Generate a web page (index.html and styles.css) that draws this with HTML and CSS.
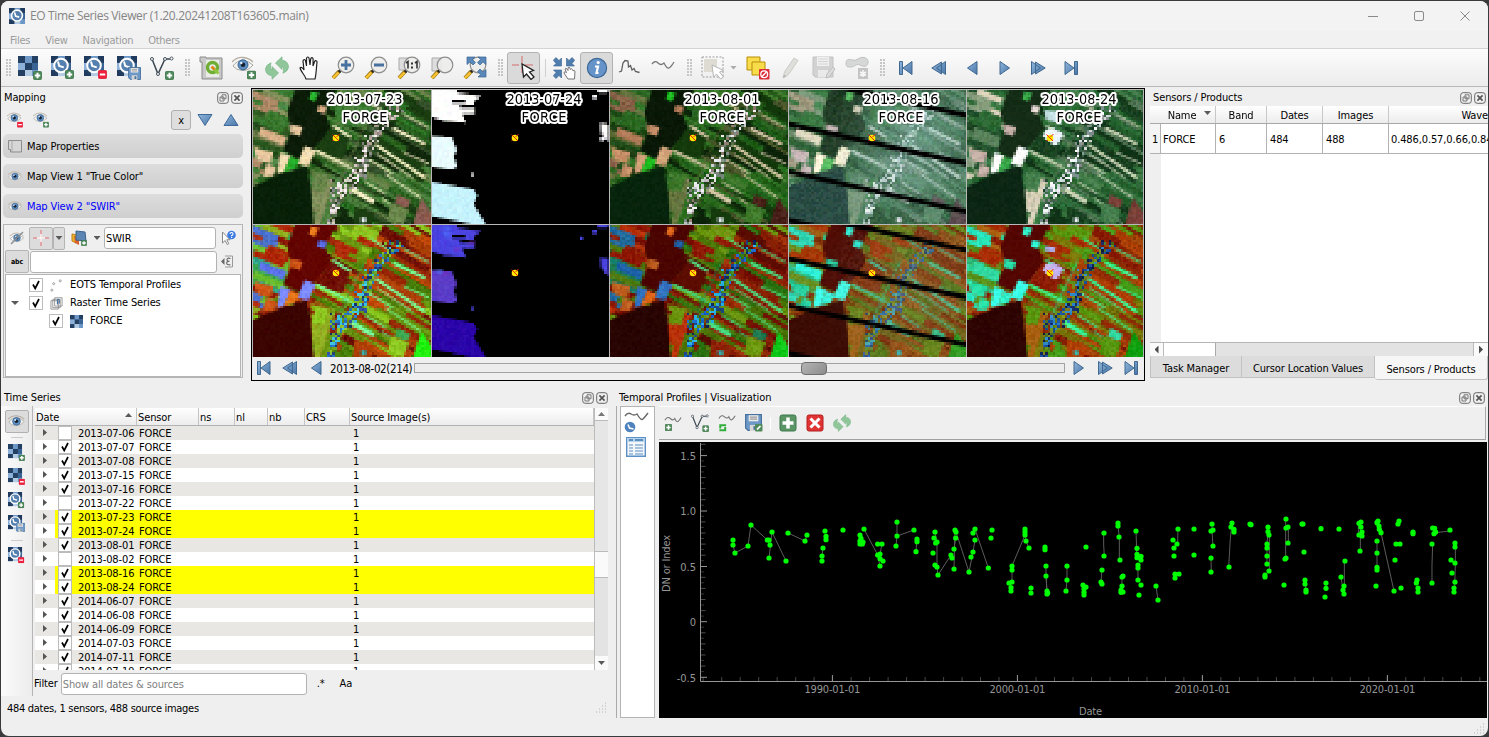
FILE: index.html
```html
<!DOCTYPE html>
<html lang="en">
<head>
<meta charset="utf-8">
<title>EO Time Series Viewer</title>
<link rel="stylesheet" href="styles.css">
</head>
<body>
<svg class="sprite" width="0" height="0" aria-hidden="true">
  <defs>
    <linearGradient id="gBlue" x1="0" y1="0" x2="1" y2="1"><stop offset="0" stop-color="#8fb6dc"/><stop offset="1" stop-color="#4a76a8"/></linearGradient>
  </defs>
  <symbol id="badge-plus" viewBox="0 0 10 10"><rect x=".5" y=".5" width="9" height="9" rx="1.2" fill="#4f8a5b" stroke="#3d7549"/><path d="M5 2v6M2 5h6" stroke="#fff" stroke-width="2.2"/></symbol>
  <symbol id="badge-minus" viewBox="0 0 10 10"><rect x=".5" y=".5" width="9" height="9" rx="1.2" fill="#f0203c" stroke="#e02040"/><path d="M2 5h6" stroke="#fff" stroke-width="2.2"/></symbol>
  <symbol id="checker" viewBox="0 0 20 20"><path fill="#6d97c6" d="M0 0h20v20H0z"/><path fill="#233f62" d="M0 0h7v7H0zM14 0h6v7h-6zM0 14h7v6H0zM7 7h7v7H7z"/><path fill="#8db1d8" d="M0 7h7v7H0z"/><path fill="#3a6494" d="M14 7h6v7h-6z"/><path fill="#b4cbe4" d="M7 14h7v6H7z"/></symbol>
  <symbol id="clock" viewBox="0 0 20 20"><use href="#checker" width="20" height="20"/><path fill="#1f3a5c" d="M0 0h6L0 6zM14 0h6v6zM0 14v6h6z"/><circle cx="10" cy="9.5" r="6.8" fill="#547fae" stroke="#fff" stroke-width="2"/><path d="M7 5.5l1.2 4.5 4.6 1.4" fill="none" stroke="#fff" stroke-width="2"/></symbol>
  <symbol id="disk" viewBox="0 0 14 14"><path d="M.5.5h13v13h-11l-2-2z" fill="#6d97c6" stroke="#48729d"/><path d="M3 1h8v5H3z" fill="#ececec"/><path d="M4 2.5h6M4 4.3h6" stroke="#999"/><path d="M4 9h6v5H4z" fill="#d6d6d6"/><path d="M7 10h2v3H7z" fill="#4b6f98"/></symbol>
  <symbol id="i-raster-add" viewBox="0 0 24 24"><use href="#checker" width="20" height="20"/><use href="#badge-plus" x="15" y="15" width="9" height="9"/></symbol>
  <symbol id="i-raster-del" viewBox="0 0 24 24"><use href="#checker" width="20" height="20"/><use href="#badge-minus" x="15" y="15" width="9" height="9"/></symbol>
  <symbol id="i-ts-add" viewBox="0 0 24 24"><use href="#clock" width="20" height="20"/><use href="#badge-plus" x="14" y="14" width="9" height="9"/></symbol>
  <symbol id="i-ts-del" viewBox="0 0 24 24"><use href="#clock" width="20" height="20"/><use href="#badge-minus" x="14" y="14" width="9" height="9"/></symbol>
  <symbol id="i-ts-save" viewBox="0 0 24 24"><use href="#clock" width="20" height="20"/><use href="#disk" x="11" y="11" width="13" height="13"/></symbol>
  <symbol id="i-vector-add" viewBox="0 0 24 24"><path d="M2 3l6 15 7-15h5" fill="none" stroke="#3a4652" stroke-width="1.5"/><g fill="#fff" stroke="#47525e"><circle cx="2" cy="3" r="1.5"/><circle cx="8" cy="18" r="1.5"/><circle cx="15" cy="3" r="1.5"/><circle cx="21.500" cy="2.500" r="1.500"/></g><use href="#badge-plus" x="15" y="15" width="9" height="9"/></symbol>
  <symbol id="i-qgis" viewBox="0 0 24 24"><path d="M1 1h6v1h16v21H3V6H1z" fill="#c9c9c9" stroke="#8b8b8b"/><path d="M7 4h13v17H7z" fill="#e9ece4"/><circle cx="13.500" cy="11.500" r="5" fill="none" stroke="#6fae34" stroke-width="3.400"/><path d="M13 11l6.500 6.500" stroke="#8ec63f" stroke-width="3"/><path d="M12.500 10.500l3 3" stroke="#ee7913" stroke-width="2.400"/></symbol>
  <symbol id="eye" viewBox="0 0 22 18"><path d="M1 10Q5 4 11 4.500T21 9Q16 15 10 14.500T1 10z" fill="#f4f4f2" stroke="#a6a6a0"/><path d="M0 6Q5 1 11 1.500T21 6" fill="none" stroke="#b5ada0" stroke-width="1.300"/><circle cx="11" cy="8.800" r="5" fill="#5f8fc2" stroke="#39618e"/><circle cx="11" cy="8.800" r="2.300" fill="#14202e"/><circle cx="9.300" cy="7" r="1.200" fill="#e0ecf8"/></symbol>
  <symbol id="i-eye-add" viewBox="0 0 24 24"><use href="#eye" width="22" height="18"/><use href="#badge-plus" x="15" y="14.500" width="9" height="9"/></symbol>
  <symbol id="i-eye-del" viewBox="0 0 24 24"><use href="#eye" width="22" height="18"/><use href="#badge-minus" x="15" y="14.500" width="9" height="9"/></symbol>
  <symbol id="i-refresh" viewBox="0 0 24 24"><g fill="#8fc79a" stroke="#78b486" stroke-width=".7"><path d="M10.500 7L17 .8v3.400q6.500.8 6.500 7-.5 4-5.500 6 1.500-6.500-1-7v3.300z"/><path d="M13.500 17L7 23.200v-3.400q-6.500-.8-6.500-7 .5-4 5.500-6-1.500 6.500 1 7v-3.300z"/></g></symbol>
  <symbol id="i-hand" viewBox="0 0 24 24"><path d="M8 23c-1-4-5-7-6-11 1-1.500 3 0 4 2L5 5c.5-2 2-2 2.500 0l1 5V2.500c.3-2 2.300-2 2.600 0L12 9l.7-6c.5-2 2.300-1.600 2.400.2L15 10l1.600-4.500c.8-1.500 2.600-.8 2.400.8-.7 6-.8 12-2 16.700z" fill="#fff" stroke="#222" stroke-width="1.200"/></symbol>
  <symbol id="lens" viewBox="0 0 24 24"><path d="M8.500 15L2 22" stroke="#8a6a16" stroke-width="4"/><path d="M7.500 16.500L2 22" stroke="#f6c02e" stroke-width="2.600"/><path d="M10.500 13.500L8 16" stroke="#222" stroke-width="3"/><circle cx="15" cy="9" r="7.800" fill="#ececea" fill-opacity=".9" stroke="#8d8d8d" stroke-width="1.200"/></symbol>
  <symbol id="i-zoom-in" viewBox="0 0 24 24"><use href="#lens" width="24" height="24"/><path d="M15 4v10M10 9h10" stroke="#47719f" stroke-width="2.800"/></symbol>
  <symbol id="i-zoom-out" viewBox="0 0 24 24"><use href="#lens" width="24" height="24"/><path d="M10 9h10" stroke="#47719f" stroke-width="2.800"/></symbol>
  <symbol id="i-zoom-native" viewBox="0 0 24 24"><path d="M2 2h9v12H2z" fill="#ddd" stroke="#aaa"/><use href="#lens" width="24" height="24"/><path d="M9 7l2-1.500V12.500M18 7l2-1.500v7" fill="none" stroke="#333" stroke-width="1.600"/><path d="M14 6.500h2v2h-2zM14 10.500h2v2h-2z" fill="#333"/></symbol>
  <symbol id="i-zoom-layer" viewBox="0 0 24 24"><path d="M2 2h9v13H2z" fill="#ddd" stroke="#aaa"/><use href="#lens" width="24" height="24"/></symbol>
  <symbol id="i-zoom-full" viewBox="0 0 24 24"><use href="#lens" width="24" height="24"/><g fill="#5a88b8" stroke="#3a6593" stroke-width=".7"><path d="M4 1h8L9.500 3.500l3 3-2.500 2.500-3-3L4 8.500z"/><path d="M23 1h-8l2.500 2.500-3 3L17 9l3-3 3 2.500zM23 21h-8l2.500-2.500-3-3 2.500-2.500 3 3 3-2.500z"/></g></symbol>
  <symbol id="i-cross" viewBox="0 0 24 24"><path d="M10 0v7M10 11v6M0 9h7M13 9h8" stroke="#d86a6a" stroke-width="1"/><path d="M10 8l1.500 13 3-3 4.500 5.500 3-2.500-4.500-5 4-1.500z" fill="#fff" stroke="#222" stroke-width="1.300"/></symbol>
  <symbol id="i-center" viewBox="0 0 24 24"><g fill="#4f7eae" stroke="#386390" stroke-width=".6"><path d="M2 3.500L4 1.500l3 3 2.500-2.500v8H1.500L4 7.500l-2.500-3z"/><path d="M22 3.500l-2-2-3 3L14.500 2v8h8L20 7.500l2.500-3zM2 20.500l2 2 3-3 2.500 2.500v-8H1.500L4 16.500l-2.500 3z"/></g><path d="M16 23l-4-6c0-1.500 1.500-1.300 2.500-.3L13 13q.5-1.500 2 0l1 1.500V12q1-1.500 2 0l.4 1.500q1-1.500 2 0l.6 1.300q1.400-1 2 .3L22.500 23z" fill="#fff" stroke="#666" stroke-width=".9"/></symbol>
  <symbol id="i-info" viewBox="0 0 24 24"><circle cx="12" cy="12" r="9.600" fill="#6694c8" stroke="#3d6797" stroke-width="1.200"/><path d="M10 10.500h3l-1.500 6.500h2" fill="none" stroke="#fff" stroke-width="2.200"/><circle cx="13.200" cy="6.500" r="1.600" fill="#fff"/></symbol>
  <symbol id="i-spectral" viewBox="0 0 24 24"><path d="M1 16l2.500-1L5 7l2-2.500 3 .5.500 6L12.500 9.500l1.500 4.500 2-1.500 1.500 3 4 1" fill="none" stroke="#606060" stroke-width="1.300"/></symbol>
  <symbol id="i-wave" viewBox="0 0 24 24"><path d="M1 8Q4 4 7 7t6 0q3 6 5 5t5-6" fill="none" stroke="#777" stroke-width="1.300"/></symbol>
  <symbol id="i-select" viewBox="0 0 24 24"><path d="M3 3h13v13H3z" fill="#dedcd2"/><path d="M1 1h21v20H1z" fill="none" stroke="#9a9a9a" stroke-dasharray="2 1.500"/><path d="M11 9l1.500 12 3-3 4 5 3-2-4-5 4-1.500z" fill="#fff" stroke="#b5b5b5"/></symbol>
  <symbol id="i-deselect" viewBox="0 0 24 24"><g fill="#f8dc4a" stroke="#b98d08"><path d="M1 1h13v13H1z"/><path d="M6 6h13v13H6z"/></g><rect x="13" y="13" width="10.500" height="10.500" rx="1" fill="#dd2c3a"/><circle cx="18.200" cy="18.200" r="3.400" fill="none" stroke="#fff" stroke-width="1.300"/><path d="M16 20.500l4.500-4.500" stroke="#fff" stroke-width="1.300"/></symbol>
  <symbol id="i-pencil" viewBox="0 0 24 24"><path d="M4 22l1.500-6L15 2l4 2.500-9.500 14z" fill="#dededa" stroke="#cbcbc7"/><path d="M4 22l1-3.500 2.500 1.700z" fill="#b5b5b5"/></symbol>
  <symbol id="i-disk-edit" viewBox="0 0 24 24"><path d="M1 1h20v20H3l-2-2z" fill="#d2d2d2" stroke="#c2c2c2"/><path d="M5 1h12v9H5z" fill="#f1f1f1"/><path d="M6 3h10M6 5.500h10M6 8h10" stroke="#d2d2d2"/><path d="M6 14h10v7H6z" fill="#e9e9e9"/><path d="M14 22l1-4 6-7 2 2-6 8z" fill="#ddd" stroke="#bdbdbd"/></symbol>
  <symbol id="i-blob" viewBox="0 0 24 24"><path d="M1 7q0-5 6-3 3 1 6-1c6-4 11 0 10 4s-4 4-8 2-5 2-9 2S1 11 1 7z" fill="#d6d8d8" stroke="#c0c0c0"/><path d="M13 12h10v11H13z" fill="#c4c4c4"/><path d="M18 14v7M15 16l6 3.500M21 16l-6 3.500" stroke="#f5f5f5" stroke-width="1.500"/></symbol>
  <symbol id="i-first" viewBox="0 0 16 16"><path d="M1.500 1.500h3v13h-3zM14 1.500v13L5 8z" fill="url(#gBlue)" stroke="#41688f"/></symbol>
  <symbol id="i-last" viewBox="0 0 16 16"><path d="M11.500 1.500h3v13h-3zM2 1.500v13L11 8z" fill="url(#gBlue)" stroke="#41688f"/></symbol>
  <symbol id="i-back2" viewBox="0 0 16 16"><path d="M14.500 1.500v13L5.500 8zM10.500 2v12L.8 8z" fill="url(#gBlue)" stroke="#41688f"/></symbol>
  <symbol id="i-fwd2" viewBox="0 0 16 16"><path d="M1.500 1.500v13L10.500 8zM5.500 2v12L15.200 8z" fill="url(#gBlue)" stroke="#41688f"/></symbol>
  <symbol id="i-back" viewBox="0 0 16 16"><path d="M13 1.500v13L3.500 8z" fill="url(#gBlue)" stroke="#41688f"/></symbol>
  <symbol id="i-fwd" viewBox="0 0 16 16"><path d="M3 1.500v13L12.500 8z" fill="url(#gBlue)" stroke="#41688f"/></symbol>
  <symbol id="i-up" viewBox="0 0 16 14"><path d="M8 1.500L15 12.500H1z" fill="url(#gBlue)" stroke="#3e6998"/></symbol>
  <symbol id="i-down" viewBox="0 0 16 14"><path d="M8 12.500L15 1.500H1z" fill="url(#gBlue)" stroke="#3e6998"/></symbol>
  <symbol id="i-float" viewBox="0 0 12 12"><rect x=".7" y=".7" width="10.600" height="10.600" rx="2.500" fill="#f2f2f2" stroke="#6a6a6a"/><path d="M5 2.800h4v4H5zM3 5h4v4H3z" fill="#f2f2f2" stroke="#777"/></symbol>
  <symbol id="i-close" viewBox="0 0 12 12"><rect x=".7" y=".7" width="10.600" height="10.600" rx="2.500" fill="#f0f0f0" stroke="#666"/><path d="M3.400 3.400l5.200 5.200M8.600 3.400L3.400 8.600" stroke="#555" stroke-width="1.700"/></symbol>
  <symbol id="i-scroll" viewBox="0 0 14 13"><path d="M.5.500H13.500v11.500h-11V9.500h-2z" fill="#d6d6d6" stroke="#8d8d8d"/><path d="M4 1v11" stroke="#aaa"/></symbol>
  <symbol id="i-eye-off" viewBox="0 0 16 14"><use href="#eye" y="1" width="16" height="12"/><path d="M2 13L14 1" stroke="#8a9096" stroke-width="1.500"/></symbol>
  <symbol id="i-crosshair" viewBox="0 0 16 16"><path d="M8 0v16M0 8h16" stroke="#e86a72" stroke-width="1"/><path d="M8 4v8M4 8h8" stroke="#fff" stroke-width="1.400"/></symbol>
  <symbol id="i-layers" viewBox="0 0 16 16"><path d="M1 4l5 1-1 8-4-2z" fill="#f0b429" stroke="#b9821a"/><path d="M3 6l5 1v8l-4-2z" fill="#d8622e"/><path d="M5 1l9 1 1 9-10-1z" fill="#5d86b4" stroke="#3d638e"/><use href="#badge-plus" x="10" y="10" width="6" height="6"/></symbol>
  <symbol id="i-help" viewBox="0 0 15 16"><path d="M1.500 2v11l2.700-2.500 2 4 1.600-.8-2-4H9z" fill="#fff" stroke="#888"/><circle cx="10.500" cy="5" r="4.300" fill="#3c7be0"/><path d="M9 4q0-1.500 1.500-1.500T12 4t-1.400 1.500v.8" fill="none" stroke="#fff" stroke-width="1.100"/><path d="M10 7h1.200v1.100H10z" fill="#fff"/></symbol>
  <symbol id="i-expr" viewBox="0 0 12 13"><path d="M0 6.500L3.500 3v7z" fill="#666"/><path d="M4 1h7.500v11H4" fill="none" stroke="#999"/><path d="M9.500 3.500q-3.500-1-3.500 1t2.500 1.700q-3 0-2.800 2T9.500 9.800" fill="none" stroke="#666" stroke-width="1.100"/></symbol>
  <symbol id="i-points" viewBox="0 0 14 14"><g fill="#fff" stroke="#999"><circle cx="11" cy="2" r="1.100"/><circle cx="4" cy="5" r="1.100"/><circle cx="2" cy="12" r="1.100"/></g></symbol>
  <symbol id="i-stack" viewBox="0 0 14 14"><path d="M1 4h8v9H1zM3 2.500h8v9H3zM5 .8h8v9H5z" fill="#fff" stroke="#888" stroke-width=".9"/><path d="M8 8V3.500q1-2 2 0V7" fill="none" stroke="#456f9c" stroke-width="1.200"/></symbol>
  <symbol id="i-table" viewBox="0 0 20 20"><path d="M.7.700h18.600v18.600H.7z" fill="#f4f7fa" stroke="#5d90c6" stroke-width="1.400"/><path d="M1 1h18v4H1z" fill="#b7d3ea"/><path d="M3 3h4M9 3h8" stroke="#3f79b4" stroke-width="1.400"/><path d="M3 8h4M9 8h8M3 11h4M9 11h8M3 14h4M9 14h8M3 17h4M9 17h8" stroke="#5b8fc4"/></symbol>
  <symbol id="i-wave-clock" viewBox="0 0 26 24"><path d="M1 6Q4 2 7 4t6 0q4 7 6 5t5-6" fill="none" stroke="#666" stroke-width="1.400"/><circle cx="6" cy="17" r="5.300" fill="#4e83bd"/><path d="M4 14.500l1.500 3.500 4 1" fill="none" stroke="#fff" stroke-width="1.500"/></symbol>
  <symbol id="i-prof-add" viewBox="0 0 20 20"><path d="M1 7Q4 2 7 5t5 0q2 5 4 3t3-4" fill="none" stroke="#777" stroke-width="1.200"/><use href="#badge-plus" x="1" y="11" width="8" height="8"/></symbol>
  <symbol id="i-prof-sync" viewBox="0 0 20 20"><path d="M1 5Q4 0 7 3t5 0q2 5 4 3t3-4" fill="none" stroke="#777" stroke-width="1.200"/><path d="M9 12.500H2.500V16M1.500 18H8v-3.500" fill="none" stroke="#2fae3b" stroke-width="2.200"/></symbol>
  <symbol id="i-disk-pen" viewBox="0 0 18 18"><use href="#disk" width="17" height="17"/><rect x="10" y="10" width="7.500" height="7.500" rx="1" fill="#4f8a5b"/><path d="M12 15.500l3.500-3.500" stroke="#fff" stroke-width="1.700"/></symbol>
  <symbol id="i-plus" viewBox="0 0 18 18"><rect x="1" y="1" width="16" height="16" rx="2" fill="#5b9566" stroke="#3f7b4c"/><path d="M9 3.500v11M3.500 9h11" stroke="#fff" stroke-width="3.500"/></symbol>
  <symbol id="i-cross-red" viewBox="0 0 18 18"><rect x="1" y="1" width="16" height="16" rx="2" fill="#e03434" stroke="#b51c1c"/><path d="M4.500 4.500l9 9M13.500 4.500l-9 9" stroke="#fff" stroke-width="3"/></symbol>
  <symbol id="i-check" viewBox="0 0 14 14"><rect x=".5" y=".5" width="13" height="13" fill="#fff" stroke="#bcbcbc"/><path d="M4 6.500l2.200 4L10 3" fill="none" stroke="#000" stroke-width="1.700"/></symbol>
  <symbol id="i-uncheck" viewBox="0 0 14 14"><rect x=".5" y=".5" width="13" height="13" fill="#fff" stroke="#bcbcbc"/></symbol>
</svg>

<div class="window">
  <header class="titlebar">
    <svg class="app-icon"><use href="#clock"/></svg>
    <span class="app-title">EO Time Series Viewer (1.20.20241208T163605.main)</span>
    <div class="window-buttons">
      <svg viewBox="0 0 12 12"><path d="M1 6.500h10"/></svg>
      <svg viewBox="0 0 12 12"><rect x="1.500" y="1.500" width="9" height="9" rx="1.500"/></svg>
      <svg viewBox="0 0 12 12"><path d="M1.500 1.500l9 9M10.500 1.500l-9 9"/></svg>
    </div>
  </header>
  <nav class="menubar"><span>Files</span><span>View</span><span>Navigation</span><span>Others</span></nav>

  <div class="toolbar">
    <i class="handle h1"></i>
    <b class="tool"><svg><use href="#i-raster-add"/></svg></b>
    <b class="tool"><svg><use href="#i-ts-add"/></svg></b>
    <b class="tool"><svg><use href="#i-ts-del"/></svg></b>
    <b class="tool"><svg><use href="#i-ts-save"/></svg></b>
    <b class="tool"><svg><use href="#i-vector-add"/></svg></b>
    <i class="handle"></i>
    <b class="tool"><svg><use href="#i-qgis"/></svg></b>
    <b class="tool"><svg><use href="#i-eye-add"/></svg></b>
    <b class="tool"><svg><use href="#i-refresh"/></svg></b>
    <b class="tool"><svg><use href="#i-hand"/></svg></b>
    <b class="tool"><svg><use href="#i-zoom-in"/></svg></b>
    <b class="tool"><svg><use href="#i-zoom-out"/></svg></b>
    <b class="tool"><svg><use href="#i-zoom-native"/></svg></b>
    <b class="tool"><svg><use href="#i-zoom-layer"/></svg></b>
    <b class="tool"><svg><use href="#i-zoom-full"/></svg></b>
    <i class="handle"></i>
    <b class="tool pressed"><svg><use href="#i-cross"/></svg></b>
    <i class="sep"></i>
    <b class="tool"><svg><use href="#i-center"/></svg></b>
    <b class="tool pressed"><svg><use href="#i-info"/></svg></b>
    <b class="tool"><svg><use href="#i-spectral"/></svg></b>
    <b class="tool"><svg><use href="#i-wave"/></svg></b>
    <i class="handle h4"></i>
    <b class="tool"><svg><use href="#i-select"/></svg></b>
    <i class="drop"></i>
    <b class="tool"><svg><use href="#i-deselect"/></svg></b>
    <b class="tool"><svg><use href="#i-pencil"/></svg></b>
    <b class="tool"><svg><use href="#i-disk-edit"/></svg></b>
    <b class="tool"><svg><use href="#i-blob"/></svg></b>
    <i class="handle"></i>
    <b class="tool nav"><svg><use href="#i-first"/></svg></b>
    <b class="tool nav"><svg><use href="#i-back2"/></svg></b>
    <b class="tool nav"><svg><use href="#i-back"/></svg></b>
    <b class="tool nav"><svg><use href="#i-fwd"/></svg></b>
    <b class="tool nav"><svg><use href="#i-fwd2"/></svg></b>
    <b class="tool nav"><svg><use href="#i-last"/></svg></b>
  </div>

  <main class="upper">
    <section class="mapping">
      <div class="dock-title"><span>Mapping</span><svg><use href="#i-float"/></svg><svg><use href="#i-close"/></svg></div>
      <div class="mapping-tools">
        <svg class="s16"><use href="#i-eye-del"/></svg>
        <svg class="s16"><use href="#i-eye-add"/></svg>
        <span class="x-button">x</span>
        <svg class="tri"><use href="#i-down"/></svg>
        <svg class="tri"><use href="#i-up"/></svg>
      </div>
      <div class="group"><svg><use href="#i-scroll"/></svg>Map Properties</div>
      <div class="group"><svg><use href="#eye"/></svg>Map View 1 "True Color"</div>
      <div class="group current"><svg><use href="#eye"/></svg>Map View 2 "SWIR"</div>
      <div class="view-box">
        <div class="view-row">
          <span class="mini"><svg><use href="#i-eye-off"/></svg></span>
          <span class="mini on"><svg><use href="#i-crosshair"/></svg></span><span class="mini-drop on"></span>
          <span class="mini lay"><svg><use href="#i-layers"/></svg></span><span class="mini-drop"></span>
          <span class="field name-field">SWIR</span>
          <svg class="row-end"><use href="#i-help"/></svg>
        </div>
        <div class="view-row second">
          <span class="mini on abc">abc</span>
          <span class="field expr-field"></span>
          <svg class="row-end small"><use href="#i-expr"/></svg>
        </div>
        <div class="tree">
          <div class="node"><i></i><svg class="check"><use href="#i-check"/></svg><svg class="node-icon"><use href="#i-points"/></svg>EOTS Temporal Profiles</div>
          <div class="node"><i class="open"></i><svg class="check"><use href="#i-check"/></svg><svg class="node-icon"><use href="#i-stack"/></svg>Raster Time Series</div>
          <div class="node child"><i></i><svg class="check"><use href="#i-check"/></svg><svg class="node-icon"><use href="#checker"/></svg>FORCE</div>
        </div>
      </div>
    </section>

    <section class="viewer">
      <div class="maps" id="maps"></div>
      <div class="date-bar">
        <svg><use href="#i-first"/></svg>
        <svg><use href="#i-back2"/></svg>
        <svg><use href="#i-back"/></svg>
        <span class="date-label">2013-08-02(214)</span>
        <div class="slider"><div class="groove"></div><div class="knob"></div></div>
        <svg><use href="#i-fwd"/></svg>
        <svg><use href="#i-fwd2"/></svg>
        <svg><use href="#i-last"/></svg>
      </div>
    </section>

    <section class="sensors">
      <div class="dock-title"><span>Sensors / Products</span><svg><use href="#i-float"/></svg><svg><use href="#i-close"/></svg></div>
      <div class="sensor-table">
        <div class="sensor-head"><span class="c0"></span><span class="c1">Name<i class="sort"></i></span><span class="c2">Band</span><span class="c3">Dates</span><span class="c4">Images</span><span class="c5">Wave</span></div>
        <div class="sensor-row"><span class="c0">1</span><span class="c1">FORCE</span><span class="c2">6</span><span class="c3">484</span><span class="c4">488</span><span class="c5">0.486,0.57,0.66,0.84</span></div>
        <div class="sensor-empty"></div>
      </div>
      <div class="hscroll"><i class="arrow left"></i><i class="thumb"></i><i class="track"></i><i class="arrow right"></i></div>
      <div class="tabs"><span>Task Manager</span><span>Cursor Location Values</span><span class="active">Sensors / Products</span></div>
    </section>
  </main>

  <div class="lower">
    <section class="series">
      <div class="dock-title"><span>Time Series</span><svg><use href="#i-float"/></svg><svg><use href="#i-close"/></svg></div>
      <div class="series-body">
        <div class="side-tools">
          <span class="side on"><svg><use href="#eye"/></svg></span>
          <i></i>
          <span class="side"><svg><use href="#i-raster-add"/></svg></span>
          <span class="side"><svg><use href="#i-raster-del"/></svg></span>
          <span class="side"><svg><use href="#i-ts-add"/></svg></span>
          <span class="side"><svg><use href="#i-ts-save"/></svg></span>
          <i></i>
          <span class="side"><svg><use href="#i-ts-del"/></svg></span>
        </div>
        <div class="series-main">
          <div class="table-wrap">
            <div class="table">
              <div class="thead"><span class="d">Date<i></i></span><span class="s">Sensor</span><span class="n1">ns</span><span class="n2">nl</span><span class="n3">nb</span><span class="n4">CRS</span><span class="src">Source Image(s)</span></div>
              <div class="tbody" id="dates"></div>
            </div>
            <div class="vscroll"><i class="up"></i><i class="vthumb"></i><i class="vtrack"></i><i class="down"></i></div>
          </div>
          <div class="filter"><span>Filter</span><span class="field">Show all dates &amp; sources</span><span class="opt">.*</span><span class="opt">Aa</span></div>
        </div>
      </div>
      <div class="status">484 dates, 1 sensors, 488 source images<svg class="grip" viewBox="0 0 12 12"><path d="M10 1h1M7 4h1M10 4h1M4 7h1M7 7h1M10 7h1M1 10h1M4 10h1M7 10h1M10 10h1" stroke="#b4b4b4"/></svg></div>
    </section>

    <section class="profiles">
      <div class="dock-title"><span>Temporal Profiles | Visualization</span><svg><use href="#i-float"/></svg><svg><use href="#i-close"/></svg></div>
      <div class="profile-body">
        <div class="page-list"><svg class="w26"><use href="#i-wave-clock"/></svg><svg class="w20"><use href="#i-table"/></svg></div>
        <div class="plot-side">
          <div class="plot-tools">
            <svg><use href="#i-prof-add"/></svg><svg><use href="#i-vector-add"/></svg><svg><use href="#i-prof-sync"/></svg><svg><use href="#i-disk-pen"/></svg><i></i><svg><use href="#i-plus"/></svg><svg><use href="#i-cross-red"/></svg><svg><use href="#i-refresh"/></svg>
          </div>
          <svg class="plot" id="plot" viewBox="660 442 828 276"></svg>
        </div>
      </div>
      <svg class="grip corner" viewBox="0 0 12 12"><path d="M10 1h1M7 4h1M10 4h1M4 7h1M7 7h1M10 7h1M1 10h1M4 10h1M7 10h1M10 10h1" stroke="#b4b4b4"/></svg>
    </section>
  </div>
</div>
<script src="app.js"></script>
</body>
</html>
```
FILE: styles.css
```css
* { box-sizing: border-box; }
body {
  margin: 0; height: 737px; overflow: hidden; background: #3a3a3c; color: #000;
  font-family: "DejaVu Sans Condensed", "DejaVu Sans", "Noto Sans", sans-serif;
  font-stretch: condensed; font-size: 11px; line-height: 14px; white-space: nowrap; letter-spacing: -.12px;
}
svg { display: block; flex: none; }
i { font-style: normal; flex: none; }
.sprite { position: absolute; }
.window {
  width: 1487px; height: 735px; margin: 1px; background: #efefef; border-radius: 8px;
  overflow: hidden; display: flex; flex-direction: column;
}

.titlebar { height: 30px; background: #f3f3f3; display: flex; align-items: center; padding-left: 8px; flex: none; }
.app-icon { width: 16px; height: 16px; }
.app-title { margin-left: 5px; color: #858585; font: 12px/16px "Open Sans", "Noto Sans", sans-serif; letter-spacing: -.35px; }
.window-buttons { margin-left: auto; display: flex; gap: 34px; padding-right: 17px; }
.window-buttons svg { width: 12px; height: 12px; fill: none; stroke: #8a8a8a; }
.menubar { height: 18px; background: #f1f1f1; border-bottom: 1px solid #d4d4d4; display: flex; gap: 15px; padding: 3px 0 0 9px; color: #9c9c9c; flex: none; letter-spacing: -.28px; }

.toolbar { height: 38px; display: flex; align-items: center; background: linear-gradient(#fcfcfc, #ececec); border-bottom: 1px solid #b9b9b9; flex: none; }
.handle { width: 16px; height: 18px; padding: 0 4px 0 7px; background: radial-gradient(circle at 1px 1px, #c4c4c4 .7px, transparent .9px) content-box; background-size: 3px 3px; background-origin: content-box; }
.handle.h1 { width: 12px; padding: 0 2px 0 5px; }
.handle.h4 { width: 17px; padding-left: 8px; }
.tool { width: 33px; height: 32px; display: flex; align-items: center; justify-content: center; flex: none; border: 1px solid transparent; border-radius: 3px; }
.tool svg { width: 24px; height: 24px; }
.tool.nav svg { width: 16px; height: 16px; }
.tool.pressed { background: #dadada; border-color: #b2b2b2; }
.sep { width: 7px; height: 18px; border-left: 1px solid #d0d0d0; margin-left: 5px; margin-right: -5px; }
.drop { width: 12px; height: 4px; background: #aaa; clip-path: polygon(1px 0, 8px 0, 4.500px 4px); }

.upper { display: flex; height: 296px; flex: none; }
.dock-title { height: 18px; display: flex; align-items: center; padding: 1px 0 0 3px; gap: 2px; flex: none; }
.dock-title span { flex: 1; }
.dock-title svg { width: 12px; height: 12px; }

.mapping { width: 242px; padding-top: 1px; }
.mapping-tools { height: 28px; display: flex; align-items: center; padding: 0 4px 0 6px; }
.s16 { width: 16px; height: 16px; margin-right: 10px; }
.x-button { width: 20px; height: 20px; margin-left: auto; margin-right: 5px; border: 1px solid #b0b0b0; border-radius: 3px; background: #dedede; text-align: center; line-height: 19px; }
.tri { width: 16px; height: 14px; margin-left: 1px; margin-right: 9px; }
.tri:last-child { margin-right: 0; }
.group { height: 24px; margin: 0 0 6px 2px; border-radius: 5px; background: linear-gradient(#dddddd, #cfcfcf); display: flex; align-items: center; padding: 2px 0 0 5px; }
.group svg { width: 14px; height: 13px; margin-right: 5px; margin-top: -2px; }
.group.current { color: #0000ff; }
.view-box { margin: 6px 0 0 2px; height: 154px; border: 1px solid #b5b5b5; padding: 1px; }
.view-row { display: flex; height: 24px; align-items: center; }
.view-row.second { height: 23px; margin-bottom: 1px; }
.mini { width: 24px; height: 23px; display: flex; align-items: center; justify-content: center; border: 1px solid transparent; border-radius: 2px; }
.mini svg { width: 16px; height: 16px; }
.mini.on, .mini-drop.on { background-color: #dcdcdc; border: 1px solid #b4b4b4; }
.mini.lay { margin-left: 2px; }
.abc { font-size: 7px; font-weight: bold; }
.mini-drop { width: 12px; height: 23px; display: flex; align-items: center; justify-content: center; border-radius: 2px; }
.mini-drop::after, .sort, .open, .thead i, .vscroll .down { content: ""; width: 7px; height: 4px; background: #5a5a5a; clip-path: polygon(0 0, 100% 0, 50% 100%); }
.field { height: 22px; background: #fff; border: 1px solid #b2b2b2; border-radius: 3px; padding: 4px 1px; line-height: 13px; }
.name-field { width: 112px; margin-left: 1px; }
.expr-field { width: 187px; margin-left: 1px; }
.row-end { width: 15px; height: 16px; margin-left: 5px; }
.row-end.small { width: 12px; height: 13px; margin-left: 4px; }
.tree { height: 103px; border: 1px solid #b5b5b5; background: #fff; padding-top: 1px; }
.node { height: 18px; display: flex; align-items: center; padding-left: 5px; }
.node > i { width: 8px; height: 4px; margin-right: 10px; }
.node.child { padding-left: 25px; }
.check { width: 14px; height: 14px; }
.node-icon { width: 13px; height: 13px; margin: 0 7px; }

.viewer { margin: 1px 0 0 8px; width: 894px; height: 293px; border: 1px solid #000; background: #efefef; }
.maps { height: 268px; padding: 1px; background: #b8b8b8; display: grid; grid-template-columns: 178px 177px 178px 177px 176px; grid-template-rows: 134px 132px; column-gap: 1px; row-gap: 1px; }
.tile { position: relative; overflow: hidden; background: #000; }
.tile canvas { display: block; width: 100%; height: 100%; image-rendering: pixelated; }
.tile svg { position: absolute; left: 0; top: 0; width: 178px; height: 134px; }
.map-label { font-size: 14.500px; text-anchor: middle; stroke: #fff; stroke-width: 4px; stroke-linejoin: round; paint-order: stroke; fill: #000; letter-spacing: 0; }
.date-bar { height: 22px; display: flex; align-items: center; padding: 0 5px 0 4px; }
.date-bar svg { width: 16px; height: 16px; margin-right: 10px; }
.date-bar svg:last-child { margin-right: 0; }
.date-label { width: 84px; margin-left: -4px; padding-top: 1px; letter-spacing: -.38px; font-size: 11.500px; }
.slider { flex: 1; height: 16px; display: grid; align-items: center; margin: 0 6px 0 0; }
.groove { grid-area: 1 / 1; height: 10px; border: 1px solid #a2a2a2; background: #ececec; }
.knob { grid-area: 1 / 1; width: 26px; height: 13px; margin-left: 387px; border: 1px solid #6e6e6e; border-radius: 4px; background: linear-gradient(135deg, #b4b4b4, #8c8c8c); }

.sensors { width: 338px; margin-left: 5px; padding-top: 1px; }
.sensor-head, .sensor-row { display: flex; }
.sensors .dock-title { padding-right: 2px; }
.sensor-head { height: 18px; background: linear-gradient(#fff, #ececec); border-bottom: 1px solid #a8a8a8; }
.sensor-head span { border-right: 1px solid #c8c8c8; text-align: center; padding-top: 3px; position: relative; }
.sensor-row { height: 30px; background: #fff; }
.sensor-row span { border-right: 1px solid #b2b2b2; border-bottom: 1px solid #b2b2b2; padding: 9px 0 0 3px; overflow: hidden; }
.sensor-row .c0 { background: #f4f4f4; }
.sensors .c0 { width: 11px; padding-left: 2px; }
.sensors .c1 { width: 55px; padding-left: 2px; }
.sensors .c2 { width: 51px; }
.sensors .c3 { width: 56px; }
.sensors .c4 { width: 66px; }
.sensors .c5 { width: 99px; border-right: 0; padding-left: 2px; }
.sensor-head .c0 { border-right-color: transparent; }
.sensor-head .c1 { padding-right: 14px; }
.sensor-head .c5 { text-align: right; }
.sort { position: absolute; right: 4px; top: 5px; }
.sensor-empty { height: 188px; background: #fff; border-left: 11px solid #efefef; }
.hscroll { height: 14px; display: flex; border-top: 1px solid #b5b5b5; background: #fafafa; }
.hscroll i { height: 13px; }
.arrow { width: 14px; border-right: 1px solid #bbb; display: flex; align-items: center; justify-content: center; }
.arrow::after { content: ""; width: 4px; height: 8px; background: #4a4a4a; clip-path: polygon(100% 0, 100% 100%, 0 50%); }
.arrow.right { border-right: 0; }
.arrow.right::after { transform: scaleX(-1); }
.thumb { width: 52px; border-right: 1px solid #aaa; background: #fff; }
.hscroll .track { flex: 1; background: #e3e3e3; border-right: 1px solid #bbb; }
.tabs { display: flex; height: 25px; align-items: flex-start; }
.tabs span { height: 22px; padding: 6px 8px 0; background: #dcdcdc; border: 1px solid #c2c2c2; border-top: 0; text-align: center; flex: none; width: 92px; }
.tabs span:nth-child(2) { width: 133px; border-left: 0; }
.tabs span.active { width: 113px; height: 24px; background: #f6f6f6; padding-top: 7px; border-radius: 0 0 3px 3px; border-left: 0; }

.lower { display: flex; flex: 1; padding-top: 6px; }
.lower .dock-title { height: 17px; padding-top: 0; }
.series { width: 607px; }
.series-body { display: flex; height: 290px; }
.side-tools { width: 32px; border-right: 1px solid #b5b5b5; background: linear-gradient(90deg, #fbfbfb, #ececec); display: flex; flex-direction: column; align-items: center; padding-top: 4px; }
.side-tools > i { width: 12px; height: 1px; background: #ccc; margin: 4px 0 3px; }
.side { width: 24px; height: 23.700px; display: flex; align-items: center; justify-content: center; border: 1px solid transparent; border-radius: 2px; }
.side svg { width: 17px; height: 17px; }
.side.on { height: 23px; background: #dcdcdc; border-color: #b0b0b0; }
.series-main { padding: 2px 0 0 2px; width: 575px; }
.table-wrap { display: flex; height: 262px; }
.table { width: 560px; overflow: hidden; }
.thead { display: flex; height: 18px; background: linear-gradient(#fff, #ececec); border-bottom: 1px solid #b2b2b2; }
.thead span { border-right: 1px solid #c4c4c4; padding: 3px 0 0 1px; }
.thead .d { display: flex; width: 102px; justify-content: space-between; padding-right: 4px; }
.thead i { transform: scaleY(-1); margin-top: 2px; }
.s { width: 62px; }
.thead .n1 { width: 36px; } .thead .n2 { width: 33px; } .thead .n3 { width: 37px; } .thead .n4 { width: 45px; }
.thead .src { flex: 1; }
.tbody { height: 244px; overflow: hidden; }
.row { display: flex; height: 14px; background: #fff; line-height: 16px; }
.row:nth-child(odd) { background: #e9e7e3; }
.row .branch { width: 20px; background: inherit; padding: 3px 0 0 8px; }
.row .branch::after { content: ""; display: block; width: 4px; height: 7px; background: #555; clip-path: polygon(0 0, 100% 50%, 0 100%); }
.row .cells { display: flex; flex: 1; padding-left: 3px; height: 14px; }
.row.hit .cells { background: #ffff00; }
.row .day { width: 67px; padding-left: 6px; flex: none; }
.row .sen { width: 214px; flex: none; }
.vscroll { width: 14px; display: flex; flex-direction: column; border-left: 1px solid #bbb; background: linear-gradient(#fafafa, #fafafa) 0 100% / 14px 14px no-repeat, #e3e3e3; }
.vscroll .up { height: 13px; background: #fafafa; border-bottom: 1px solid #bbb; display: flex; align-items: center; justify-content: center; }
.vscroll .up::after { content: ""; width: 7px; height: 4px; background: #777; clip-path: polygon(50% 0, 100% 100%, 0 100%); }
.vthumb { height: 130px; background: #e6e6e6; }
.vtrack { height: 27px; background: #fafafa; border-top: 1px solid #bbb; border-bottom: 1px solid #bbb; }
.vscroll .down { margin: auto auto 5px 3px; }
.filter { display: flex; align-items: center; height: 24px; margin-top: 2px; }
.filter > span:first-child { margin-left: -1px; }
.filter .field { width: 246px; margin: 0 10px 0 3px; color: #808080; }
.filter .opt { margin-right: 15px; }
.status { display: flex; justify-content: space-between; padding: 6px 1px 0 6px; letter-spacing: -.3px; }
.grip { width: 12px; height: 12px; }

.profiles { width: 871px; margin-left: 8px; position: relative; }
.profile-body { display: flex; height: 312px; border-left: 1px solid #aaa; padding-left: 3px; }
.profiles .dock-title { padding-right: 2px; }
.page-list { width: 36px; background: #fff; border: 1px solid #b4b4b4; padding: 3px 0 0 3px; margin-right: 4px; }
.w26 { width: 26px; height: 24px; }
.w20 { width: 20px; height: 20px; margin: 3px 0 0 2px; }
.plot-tools { height: 34px; width: 827px; border-top: 1px solid #fff; border-right: 1px solid #aaa; border-bottom: 1px solid #a0a0a0; display: flex; align-items: center; padding-left: 5px; gap: 9px; margin-bottom: 2px; }
.plot-tools svg { width: 18px; height: 18px; }
.plot-tools i { width: 1px; height: 13px; background: #fff; margin: 0 -1px 0 -2px; }
.plot { width: 828px; height: 276px; background: #000; }
.plot text { fill: #969696; font-size: 11px; letter-spacing: 0; }
.corner { position: absolute; right: 2px; bottom: 1px; }
```
FILE: app.js
```js
// ---- deterministic random numbers ----
function rng(seed) {
  return function () {
    seed |= 0; seed = seed + 0x6D2B79F5 | 0;
    let t = Math.imul(seed ^ seed >>> 15, 1 | seed);
    t = t + Math.imul(t ^ t >>> 7, 61 | t) ^ t;
    return ((t ^ t >>> 14) >>> 0) / 4294967296;
  };
}

// ---- map tiles ----
const W = 178, H = 134, CW = 72, CH = 54;
const DATES = ['2013-07-23', '2013-07-24', '2013-08-01', '2013-08-16', '2013-08-24'];
const TC = [
  { left: ['#3a7a30', '#6a7a48', '#2d5a22', '#b08a68', '#4c8a48', '#27501c', '#83905c'], right: ['#2b6420', '#4b803c', '#1b3f12', '#68854a', '#2a7222', '#37542c', '#10280b'], wood: '#0b1c08', wood2: '#082008', bare: ['#d8b088', '#f0dcb0', '#e8c8a0'], lite: '#f4f0c4', town: ['#d8d0c8', '#8a8c86', '#f4ecec', '#56684e', '#b0a098', '#28401e'], green: '#25b02a', pink: '#8a5a50' },
  null,
  { left: ['#2d6a24', '#57642f', '#1f4a18', '#8a6248', '#357a2c', '#1c3f14', '#66753f'], right: ['#1f5f18', '#2c7220', '#143a0c', '#3f7a2c', '#26601c', '#4c5a2c', '#0c240a'], wood: '#091807', wood2: '#07240c', bare: ['#b07a58', '#d0a078', '#c89068'], lite: '#d4c6a4', town: ['#c8c8c8', '#7a8a80', '#ececf0', '#3c5a34', '#908070', '#1c3c14'], green: '#1fc020', pink: '#4a2018' },
  { left: ['#3c7a44', '#6a8a66', '#2f6238', '#a09a80', '#4c8a56', '#35603c', '#7c9a7c'], right: ['#3c7048', '#4f8460', '#345f3e', '#5c8c6a', '#3e7a50', '#6a8c74', '#2f5a3a'], wood: '#203c24', wood2: '#2a4c44', bare: ['#e0d8c0', '#fff8dc', '#c8b8b8'], lite: '#ccdcd0', town: ['#c8d8d4', '#88a89c', '#f0f8f4', '#608870', '#a8b8b4', '#3c6450'], green: '#58c060', pink: '#5a4a4c' },
  { left: ['#2c6a34', '#58805a', '#20502c', '#8aa080', '#3a7a44', '#1c4624', '#d8d0b8'], right: ['#24602c', '#357440', '#184220', '#46804e', '#2a6c36', '#547a58', '#103417'], wood: '#142c16', wood2: '#0c2614', bare: ['#e8dcd8', '#ffffff', '#c8b0a8'], lite: '#c8d4b4', town: ['#d0d8d8', '#78908c', '#f4f8fc', '#3c6048', '#8a9090', '#1c4428'], green: '#38a848', pink: '#7a4038' }
];
const SW = [
  { left: ['#b02808', '#3aa850', '#6ac030', '#4a70d0', '#8a1804', '#30a888', '#90b020'], right: ['#9a2604', '#6a9810', '#b04008', '#8cc820', '#701004', '#c84c08', '#4a8008'], wood: '#620400', wood2: '#3a0400', bare: ['#5a70e8', '#7a8aff', '#d05818'], lite: '#78ff9c', town: ['#2878c8', '#3050a0', '#40c8e0', '#60a028', '#183868', '#88c030'], green: '#e87818', pink: '#20f010' },
  null,
  { left: ['#901804', '#1c7a50', '#507a10', '#206aa0', '#7a1002', '#18806c', '#b83008'], right: ['#781002', '#4c7808', '#8c2004', '#6c9810', '#5c0c02', '#a03008', '#2c7410'], wood: '#4a0400', wood2: '#280402', bare: ['#1c60a8', '#3070c0', '#c06020'], lite: '#48dc80', town: ['#1868d0', '#204888', '#28b0e0', '#40841c', '#102c60', '#608c14'], green: '#e06818', pink: '#10c818' },
  { left: ['#a83808', '#30c088', '#6a9020', '#30d8b8', '#803008', '#50a040', '#a06018'], right: ['#8a3408', '#7a6818', '#985014', '#6a8818', '#843008', '#a05c18', '#5a7c18'], wood: '#500c04', wood2: '#3c0c04', bare: ['#30f0d8', '#40ffe8', '#28d0a0'], lite: '#48c898', town: ['#3070b0', '#405890', '#48a8b0', '#608838', '#284868', '#889030'], green: '#38f0d8', pink: '#30a020' },
  { left: ['#a82c04', '#30d8a0', '#589018', '#28e8c0', '#8a1c02', '#2cb878', '#a86010'], right: ['#942c04', '#7a7808', '#b04004', '#589810', '#8a1c02', '#a84808', '#48a018'], wood: '#540602', wood2: '#2e0402', bare: ['#30f8d8', '#38ffe8', '#28e0a8'], lite: '#38f898', town: ['#1c50a0', '#142c68', '#3088c8', '#4c7020', '#102048', '#7c8c18'], green: '#30f0c8', pink: '#10a010' }
];

function poly(g, pts, color) {
  g.beginPath();
  for (let i = 0; i < pts.length; i += 2) g.lineTo(pts[i], pts[i + 1]);
  g.closePath();
  if (color) { g.fillStyle = color; g.fill(); }
}

// Strip-shaped parcels running at a given angle inside an outline.
function parcels(g, outline, angle, thick, len, colors, r) {
  g.save();
  poly(g, outline); g.clip();
  g.translate(89, 67); g.rotate(angle);
  for (let v = -150; v < 150;) {
    const t = thick * (.6 + r());
    for (let u = -170 + r() * 20; u < 170;) {
      const l = len * (.4 + r() * 1.2);
      g.fillStyle = colors[Math.floor(r() * colors.length)];
      g.fillRect(u, v, l + .6, t + .6);
      u += l;
    }
    v += t;
  }
  g.restore();
}

function strip(g, x1, y1, x2, y2, w, c) {
  g.strokeStyle = c; g.lineWidth = w;
  g.beginPath(); g.moveTo(x1, y1); g.lineTo(x2, y2); g.stroke();
}

function landscape(g, p, idx, swir) {
  const r = rng(41);
  parcels(g, [0, 0, W, 0, W, H, 0, H], .53, 4.4, 46, p.right, r);
  parcels(g, [0, 0, 45, 0, 30, 68, 0, 92], .38, 5, 24, p.left, r);
  parcels(g, [86, 0, 130, 0, 112, 40, 80, 33], .45, 4, 20, [p.right[1], p.right[3], p.left[0]], r);
  parcels(g, [58, 80, 100, 92, 76, 134, 58, 134], 1.9, 5, 22, [p.left[4], p.right[3], p.right[1], p.left[6]], r);
  poly(g, [42, 0, 84, 0, 72, 22, 78, 40, 62, 58, 52, 70, 30, 60, 38, 42, 34, 22], p.wood);
  poly(g, [78, 36, 98, 45, 90, 70, 62, 60], swir ? p.right[4] : p.right[2]);
  poly(g, [0, 97, 28, 84, 54, 76, 58, 100, 61, 134, 0, 134], p.wood2);
  poly(g, [66, 15, 74, 17, 72, 24, 64, 22], p.bare[0]);
  poly(g, [38, 34, 50, 37, 47, 46, 37, 43], p.bare[2]);
  poly(g, [8, 37, 34, 47, 30, 55, 6, 45], idx === 4 ? p.left[1] : p.bare[0]);
  poly(g, [52, 56, 63, 60, 55, 77, 44, 74], p.bare[1]);
  poly(g, [2, 58, 20, 62, 18, 74, 4, 70], p.bare[2]);
  poly(g, [28, 62, 38, 66, 31, 82, 24, 84], p.bare[1]);
  poly(g, [37, 67, 46, 71, 42, 79, 31, 82], p.green);
  poly(g, [58, 2, 66, 4, 62, 12, 56, 9], p.green);
  poly(g, [14, 74, 24, 78, 20, 86, 10, 87], p.bare[2]);
  [[80, 36, 98, 47, 3], [63, 60, 98, 78, 2.6], [122, 54, 172, 88, 3.2], [140, 38, 172, 54, 3.4], [116, 70, 140, 84, 2.2],
   [124, 64, 160, 88, 1.8], [132, 84, 168, 108, 1.8], [98, 99, 121, 112, 4.5], [128, 108, 150, 122, 1.8], [150, 62, 176, 74, 1.7], [112, 92, 132, 104, 1.8], [150, 24, 176, 38, 1.8], [118, 14, 134, 24, 2.2]]
    .forEach(s => strip(g, s[0], s[1], s[2], s[3], s[4], p.lite));
  poly(g, [145, 104, 158, 111, 154, 118, 142, 114], swir ? p.left[1] : p.pink);
  poly(g, [138, 112, 156, 120, 150, 134, 134, 130], p.right[3]);
  poly(g, [168, 108, 178, 122, 178, 134, 160, 134], p.pink);
  poly(g, [102, 116, 122, 124, 118, 134, 100, 134], p.right[2]);
  strip(g, 62, 78, 96, 92, 1.2, p.right[3]);
  strip(g, 112, 36, 80, 104, 1.3, p.left[1]);
  // settlement pixels along the main road, snapped to raster cells
  const path = [[78, 134], [84, 112], [90, 94], [108, 82], [114, 60], [124, 42], [144, 18]];
  const w = [4, 5, 17, 11, 7, 10, 12];
  const cx = W / CW, cy = H / CH;
  for (let i = 0; i < 330; i++) {
    const k = Math.min(5, Math.floor(r() * 6)), f = r();
    const s = w[k] * (1 - f) + w[k + 1] * f, d = (r() + r() - 1) * s;
    g.fillStyle = p.town[Math.floor(r() * p.town.length)];
    const x = path[k][0] * (1 - f) + path[k + 1][0] * f + d;
    const y = path[k][1] * (1 - f) + path[k + 1][1] * f + (r() - .5) * 8;
    g.fillRect(Math.floor(x / cx) * cx, Math.floor(y / cy) * cy, cx, cy);
  }
  g.fillStyle = swir ? '#30b0b0' : '#e0e4e8';
  g.fillRect(108, 127, 5, 5);
  if (idx === 4) {
    poly(g, [80, 40, 88, 38, 98, 44, 92, 54, 88, 55, 76, 46], swir ? '#c8b4f4' : '#f0f8ff');
    if (!swir) poly(g, [78, 20, 96, 22, 96, 34, 80, 30], '#c8e4e8');
    else poly(g, [80, 21, 90, 23, 88, 28, 78, 26], '#b0b0f0');
  }
}

function clouds(g, swir) {
  const c = swir ? ['#4a42e0', '#5a3cc8', '#2a04a8'] : ['#ffffff', '#e8fbff', '#c4f2fc'];
  poly(g, [0, 0, 24, 0, 26, 3, 50, 6, 42, 12, 43, 24, 30, 24, 35, 33, 12, 31, 0, 27], c[0]);
  poly(g, [0, 46, 20, 47, 25, 60, 22, 66, 25, 77, 20, 80, 0, 77], c[1]);
  poly(g, [0, 92, 42, 99, 46, 106, 42, 114, 54, 134, 40, 134, 0, 126], c[2]);
  poly(g, [169, 33, 177, 34, 177, 52, 170, 45], c[0]);
  g.fillStyle = '#000';
  g.fillRect(20, 10, 14, 3); g.fillRect(28, 15, 14, 3); g.fillRect(169, 44, 3, 4);
  g.fillStyle = c[0];
  g.fillRect(161, 5, 5, 4); g.fillRect(166, 0, 11, 3); g.fillRect(39, 83, 3, 3);
  if (swir) g.fillRect(148, 12, 4, 3); else g.fillRect(169, 47, 4, 4);
  if (swir) {
    g.globalCompositeOperation = 'source-atop';
    const r = rng(5);
    for (let i = 0; i < 16; i++) {
      g.fillStyle = i % 2 ? 'rgba(140,40,180,.35)' : 'rgba(70,120,255,.45)';
      const x = r() * 46, y = r() * 76;
      if (g.getImageData(Math.floor((x + 4) * CW / W), Math.floor((y + 3) * CH / H), 1, 1).data[2] > 100) g.fillRect(x, y, 7, 4);
    }
    g.globalCompositeOperation = 'source-over';
  }
}

function tile(idx, swir) {
  const cv = document.createElement('canvas');
  cv.width = CW; cv.height = CH;
  const g = cv.getContext('2d', { willReadFrequently: true });
  g.scale(CW / W, CH / H);
  g.fillStyle = '#000'; g.fillRect(0, 0, W, H);
  if (idx === 1) clouds(g, swir);
  else {
    landscape(g, (swir ? SW : TC)[idx], idx, swir);
    if (idx === 3) {
      const haze = g.createRadialGradient(135, 50, 5, 125, 60, 95);
      haze.addColorStop(0, swir ? 'rgba(130,120,80,.3)' : 'rgba(150,200,190,.5)');
      haze.addColorStop(1, 'rgba(100,130,130,0)');
      g.fillStyle = haze; g.fillRect(0, 0, W, H);
    }
  }
  const img = g.getImageData(0, 0, CW, CH), r = rng(9 + idx), a = idx === 1 ? 10 : 20;
  for (let i = 0; i < img.data.length; i += 4) {
    const n = (r() - .5) * a, lum = img.data[i] + img.data[i + 1] + img.data[i + 2];
    if (idx === 1 && lum < 150) {
      if (!swir || lum < 60) { img.data[i] = img.data[i + 1] = img.data[i + 2] = 0; }
      continue;
    }
    const k = lum < 110 ? .35 : 1;
    for (let c = 0; c < 3; c++) img.data[i + c] += n * k + (r() - .5) * 10 * k;
  }
  g.putImageData(img, 0, 0);
  if (idx === 3) {
    [-1, 47, 95, 143].forEach(y => strip(g, -5, y - 14, 185, y + 28, 5, '#000'));
  }
  return cv;
}

const maps = document.getElementById('maps');
[false, true].forEach(swir => DATES.forEach((d, i) => {
  const el = document.createElement('div');
  el.className = 'tile';
  el.appendChild(tile(i, swir));
  const label = swir ? '' :
    `<text class="map-label" x="112" y="14" textLength="75">${d}</text><text class="map-label" x="112" y="32" textLength="45">FORCE</text>`;
  el.insertAdjacentHTML('beforeend', `<svg viewBox="0 0 178 134">${label}<circle cx="83" cy="48" r="3.300" fill="#ffe800"/><path d="M79.500 44.500l6.500 6.500M86.500 44l-3 3M80.500 50l-1 1" stroke="#e82010" stroke-width="1"/></svg>`);
  maps.appendChild(el);
}));

// ---- date table ----
const rows = [
  ['2013-07-06', 0, 0], ['2013-07-07', 1, 0], ['2013-07-08', 1, 0], ['2013-07-15', 1, 0], ['2013-07-16', 1, 0], ['2013-07-22', 0, 0],
  ['2013-07-23', 1, 1], ['2013-07-24', 1, 1], ['2013-08-01', 1, 0], ['2013-08-02', 0, 0], ['2013-08-16', 1, 1], ['2013-08-24', 1, 1],
  ['2014-06-07', 1, 0], ['2014-06-08', 1, 0], ['2014-06-09', 1, 0], ['2014-07-03', 1, 0], ['2014-07-11', 1, 0], ['2014-07-19', 1, 0]
];
document.getElementById('dates').innerHTML = rows.map(([d, on, hit]) =>
  `<div class="row${hit ? ' hit' : ''}"><span class="branch"></span><div class="cells"><svg class="check"><use href="#${on ? 'i-check' : 'i-uncheck'}"/></svg><span class="day">${d}</span><span class="sen">FORCE</span><span>1</span></div></div>`).join('');

// ---- profile plot; point coordinates are in thirds of a pixel ----
const A = [372,465,372,480,378,504,417,483,426,420,475,465,480,465,483,480,480,519,489,441,531,528,537,444,588,468,594,450,648,438,651,454,651,464,642,489,639,513,639,528,702,435,765,432,753,450,756,460,753,468,762,471,753,477,760,477,806,477,819,477,806,510,813,507,813,521,822,528,813,543,864,411,864,453,861,483,915,435,924,462,924,470,921,500,978,441,975,459,984,471,980,474,972,504,978,540,984,546,987,570,1038,435,1041,441,1040,459,1035,492,1026,510,1029,519,1035,552,1098,432,1092,444,1098,465,1092,501,1086,516,1080,561,1138,549,1149,435,1146,459,1248,432,1248,441,1248,450,1251,468,1260,489,1209,543,1209,555,1200,594,1209,591,1206,608,1206,618,1266,609,1266,624];
const B = [18,486,18,494,21,543,21,573,24,618,24,627,26,624,84,543,84,585,81,618,141,486,132,600,141,606,135,612,135,622,135,630,195,444,195,513,189,555,186,591,189,597,237,414,237,423,240,456,243,525,252,573,249,576,249,603,246,615,252,621,246,622,291,438,294,490,294,508,294,518,306,514,306,525,297,540,297,549,297,585,306,600,300,630,351,603,357,645,402,465,405,489,405,513,414,477,417,432,408,567,420,567,408,579,465,432,465,510,519,417,522,435,516,438,522,483,516,519,516,561,570,546,576,426,579,414,585,433,585,441,633,417,636,419,687,426,687,440,690,450,684,477,684,489,684,513,684,537,690,558,678,570,678,576,741,402,741,429,747,426,747,474,738,522,741,519,735,600,789,417,792,417,795,501,798,585,798,597,801,615,801,621,846,431,861,594,861,610,858,636,900,432,918,528,906,576,915,603,912,615,915,627,966,411,960,415,966,426,969,441,960,450,969,453,963,498,1017,408,1014,413,1020,423,1021,433,1026,443,1014,468,1014,504,1014,547,1014,555,1011,603,1080,408,1077,417,1071,477,1083,477,1068,525,1065,618,1086,609,1122,441,1122,446,1134,585,1132,594,1137,609,1137,621,1181,429,1187,430,1190,441,1185,446,1179,477,1179,594,1233,435,1248,474,1248,486,1236,525,1248,534,1239,564,1248,591,1245,609,1245,621];
const LA = 'M372 465V480L378 504L417 483L426 420L475 465L483 480M480 519L489 441L531 528M537 444L588 468L594 450M642 489L639 513V528M765 432L806 510L813 543M819 477L813 507M861 483L864 453V411M864 453L915 435M924 462L921 500M984 471V546L987 570L1026 510M978 441L984 471M1035 492L1040 459M1038 435L1035 552M1041 441L1080 561L1092 501L1098 465M1098 432L1138 549M1209 543L1248 450M1209 543V591M1248 432L1251 468L1260 489M1311 543V573L1314 618';
const LB = 'M21 573L24 618M84 543V585L81 618M194 444V480L196 513M189 555L186 591M237 423L241 456V525M249 576V603M291 438L293 490V518M297 540V585M351 603L357 645M417 432L416 477M519 417V438L522 483M516 519L517 561M579 414L574 460L569 546M687 440L684 477V537M691 450V558M740 402V519M748 426V474M798 585L801 615M861 594V610M916 528V603M906 576L912 615M958 411V450M964 426V498M1014 468V547M1026 443L1065 618M1179 594V540L1181 477M1190 443L1233 438M1249 474V534L1247 609';
let ticks = '';
for (let i = -5; i <= 16; i++) {
  const y = 621.7 - i * 11.09;
  if (i % 5) ticks += `<path d="M702 ${y.toFixed(1)}h4.500" stroke="#4a4a4a"/>`;
  if (i > -5) ticks += `<path d="M702 ${(y + 5.5).toFixed(1)}h3" stroke="#333"/>`;
}
for (let i = 0; i <= 42; i++) {
  const x = 704.2 + i * 18.49;
  if (x < 1488) ticks += `<path d="M${x.toFixed(1)} 681v-4" stroke="#454545"/>`;
}
[['1.5', 455.6], ['1.0', 511], ['0.5', 566.5], ['0', 621.7], ['-0.5', 677.3]].forEach(([t, y]) => {
  ticks += `<path d="M701.500 ${y}h6.500" stroke="#969696"/><text x="697" y="${y + 4.2}" text-anchor="end">${t}</text>`;
});
[['1990-01-01', 833.4], ['2000-01-01', 1018.4], ['2010-01-01', 1203.4], ['2020-01-01', 1388.4]].forEach(([t, x]) => {
  ticks += `<path d="M${x} 681v-6" stroke="#969696"/><text x="${x}" y="693" text-anchor="middle" textLength="56">${t}</text>`;
});
function cloud(list, line, ox) {
  let s = `<g transform="translate(${ox} 385) scale(.33333)"><path d="${line}" fill="none" stroke="#5c5c5c" stroke-width="3"/>`;
  for (let i = 0; i < list.length; i += 2) s += `<circle cx="${list[i]}" cy="${list[i + 1]}" r="7.800" fill="#00ff00"/>`;
  return s + '</g>';
}
document.getElementById('plot').innerHTML =
  `<path d="M701.500 443V681.500H1488" fill="none" stroke="#969696"/>${ticks}` +
  '<text x="1091.500" y="715" text-anchor="middle" textLength="23">Date</text>' +
  '<text transform="translate(671 563.500) rotate(-90)" text-anchor="middle" textLength="57">DN or Index</text>' +
  cloud(A, LA, 610) + cloud(B, LB, 1040);
```
